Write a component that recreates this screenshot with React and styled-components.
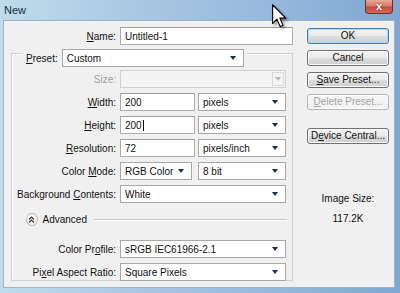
import React from 'react'
import styled, { createGlobalStyle } from 'styled-components'

const GlobalStyle = createGlobalStyle`
  html, body {
    margin: 0;
    padding: 0;
  }
  body {
    width: 400px;
    height: 293px;
    overflow: hidden;
    background: #9fc0e0;
    font-family: "Liberation Sans", Arial, sans-serif;
  }
`

const Window = styled.div`
  position: relative;
  width: 400px;
  height: 293px;
  box-sizing: border-box;
  display: flex;
  flex-direction: column;
  padding: 0 5px 5px 3px;
  background: linear-gradient(90deg, #bfdcec 0%, #a9c7e3 35%, #94b7dc 70%, #7fa7d2 100%);
`

const TitleBar = styled.div`
  height: 20px;
  display: flex;
  justify-content: space-between;
  align-items: flex-start;
  margin-left: -3px;
  margin-right: -5px;
  padding-left: 4px;
  padding-right: 7px;
`

const Title = styled.span`
  font-size: 11px;
  line-height: 20px;
  color: #1b2c40;
`

const CloseButton = styled.div`
  width: 28px;
  height: 14px;
  box-sizing: border-box;
  border: 1px solid #7a2a24;
  border-top: none;
  border-radius: 0 0 4px 4px;
  background: linear-gradient(180deg, #e9a797 0%, #d77a6a 45%, #c44b3b 55%, #d66a55 100%);
  color: #fff;
  font-size: 11px;
  font-weight: bold;
  line-height: 12px;
  text-align: center;
  text-shadow: 0 0 2px #5a1010;
`

const Body = styled.div`
  flex: 1;
  display: flex;
  box-sizing: border-box;
  border: 1px solid #9fb4c9;
  background: #f0f0f0;
  padding: 6px 0 0 7px;
  font-size: 10px;
  color: #111;
`

const LeftColumn = styled.div`
  width: 282px;
  display: flex;
  flex-direction: column;
`

const NameRow = styled.div`
  display: grid;
  grid-template-columns: 105px 173px;
  column-gap: 4px;
  align-items: center;
  height: 18px;
`

const Label = styled.span`
  text-align: right;
  white-space: nowrap;
  color: ${p => (p.$disabled ? '#a0a0a0' : '#111')};
`

const Key = styled.span`
  text-decoration: underline;
`

const TextBox = styled.div`
  height: 18px;
  box-sizing: border-box;
  border: 1px solid #abadb3;
  border-top-color: #9a9ca3;
  background: #fff;
  padding: 0 4px;
  display: flex;
  align-items: center;
  width: ${p => p.$w || 'auto'};
`

const Caret = styled.span`
  display: inline-block;
  width: 1px;
  height: 11px;
  background: #000;
  margin-left: 1px;
`

const SelectBox = styled.div`
  height: 18px;
  box-sizing: border-box;
  border: 1px solid ${p => (p.$disabled ? '#d0d0d0' : '#a8a8a8')};
  background: ${p => (p.$disabled ? '#f4f4f4' : '#fff')};
  padding: 0 0 0 4px;
  display: flex;
  align-items: center;
  justify-content: space-between;
  width: ${p => p.$w || 'auto'};
  white-space: nowrap;
`

const Arrow = styled.span`
  width: 0;
  height: 0;
  margin-right: 7px;
  border-left: 3.5px solid transparent;
  border-right: 3.5px solid transparent;
  border-top: 4px solid #1b2a5a;
`

const DisabledDrop = styled.span`
  width: 12px;
  height: 14px;
  margin-right: 1px;
  box-sizing: border-box;
  border: 1px solid #dadada;
  background: #f4f4f4;
  display: flex;
  align-items: center;
  justify-content: center;

  &::after {
    content: '';
    border-left: 3.5px solid transparent;
    border-right: 3.5px solid transparent;
    border-top: 4px solid #b8b8b8;
  }
`

const Group = styled.div`
  margin-top: 8px;
  width: 282px;
  height: 228px;
  box-sizing: border-box;
  border: 1px solid #d0d0d0;
  box-shadow: inset 1px 1px 0 #fff;
  display: flex;
  flex-direction: column;
  gap: 6px;
  padding-right: 5px;
`

const GroupHeader = styled.div`
  margin-top: -5px;
  margin-left: 11px;
  margin-bottom: -3px;
  padding: 0 3px;
  background: #f0f0f0;
  align-self: flex-start;
  display: flex;
  align-items: center;
  gap: 4px;
  height: 18px;
`

const Row = styled.div`
  display: grid;
  grid-template-columns: 104px 1fr;
  column-gap: 4px;
  align-items: center;
  height: 17px;
`

const Pair = styled.div`
  display: flex;
  gap: ${p => p.$gap || 3}px;
`

const AdvancedRow = styled.div`
  display: flex;
  align-items: center;
  height: 22px;
  padding-left: 14px;
  gap: 5px;
  margin-bottom: 5px;
  margin-top: 1px;
`

const Toggle = styled.span`
  width: 13px;
  height: 13px;
  box-sizing: border-box;
  border-radius: 50%;
  border: 1px solid #b9b9b9;
  background: radial-gradient(circle at 50% 35%, #ffffff 0%, #ececec 100%);
  display: flex;
  align-items: center;
  justify-content: center;
`

const Rule = styled.span`
  flex: 0 0 193px;
  height: 1px;
  background: #c4c4c4;
  box-shadow: 0 1px 0 #fff;
  margin-left: 2px;
`

const RightColumn = styled.div`
  margin-left: 14px;
  padding-top: 1px;
  width: 82px;
  display: flex;
  flex-direction: column;
  align-items: center;
  gap: 6px;
`

const Button = styled.div`
  width: 82px;
  height: 16px;
  box-sizing: border-box;
  border: 1px solid ${p => (p.$primary ? '#3c7fb1' : p.$disabled ? '#b5b8ba' : '#707070')};
  border-radius: 3px;
  background: ${p =>
    p.$disabled
      ? '#f4f4f4'
      : 'linear-gradient(180deg, #f2f2f2 0%, #ebebeb 50%, #dddddd 51%, #cfcfcf 100%)'};
  box-shadow: ${p => (p.$primary ? 'inset 0 0 0 1px #b0dcf3' : 'inset 0 0 0 1px #fcfcfc')};
  color: ${p => (p.$disabled ? '#a3a3a3' : '#111')};
  text-align: center;
  line-height: 14px;
  margin-top: ${p => p.$gap || 0}px;
`

const Info = styled.div`
  margin-top: 43px;
  display: flex;
  flex-direction: column;
  align-items: center;
  gap: 8px;
  line-height: 12px;
`

const Pointer = styled.svg`
  position: absolute;
  left: 272px;
  top: 4px;
  filter: drop-shadow(2px 2px 1.5px rgba(0, 0, 0, 0.35));
`

const Select = ({ children, w, disabled }) => (
  <SelectBox $w={w} $disabled={disabled}>
    <span>{children}</span>
    {disabled ? <DisabledDrop /> : <Arrow />}
  </SelectBox>
)

const App = () => (
  <Window>
    <GlobalStyle />
    <TitleBar>
      <Title>New</Title>
      <CloseButton>x</CloseButton>
    </TitleBar>
    <Body>
      <LeftColumn>
        <NameRow>
          <Label><Key>N</Key>ame:</Label>
          <TextBox>Untitled-1</TextBox>
        </NameRow>
        <Group>
          <GroupHeader>
            <Label><Key>P</Key>reset:</Label>
            <Select w="182px">Custom</Select>
          </GroupHeader>
          <Row>
            <Label $disabled>Size:</Label>
            <Select disabled w="166px" />
          </Row>
          <Row>
            <Label><Key>W</Key>idth:</Label>
            <Pair>
              <TextBox $w="75px">200</TextBox>
              <Select w="88px">pixels</Select>
            </Pair>
          </Row>
          <Row>
            <Label><Key>H</Key>eight:</Label>
            <Pair>
              <TextBox $w="75px">200<Caret /></TextBox>
              <Select w="88px">pixels</Select>
            </Pair>
          </Row>
          <Row>
            <Label><Key>R</Key>esolution:</Label>
            <Pair>
              <TextBox $w="75px">72</TextBox>
              <Select w="88px">pixels/inch</Select>
            </Pair>
          </Row>
          <Row>
            <Label>Color <Key>M</Key>ode:</Label>
            <Pair $gap={6}>
              <Select w="72px">RGB Color</Select>
              <Select w="88px">8 bit</Select>
            </Pair>
          </Row>
          <Row>
            <Label>Background <Key>C</Key>ontents:</Label>
            <Select w="166px">White</Select>
          </Row>
          <AdvancedRow>
            <Toggle>
              <svg width="7" height="7" viewBox="0 0 7 7">
                <path d="M1 3.5 L3.5 1 L6 3.5 M1 6.5 L3.5 4 L6 6.5" fill="none" stroke="#333" strokeWidth="1.1" />
              </svg>
            </Toggle>
            <span>Advanced</span>
            <Rule />
          </AdvancedRow>
          <Row>
            <Label>Color Pr<Key>o</Key>file:</Label>
            <Select w="166px">sRGB IEC61966-2.1</Select>
          </Row>
          <Row>
            <Label>Pi<Key>x</Key>el Aspect Ratio:</Label>
            <Select w="166px">Square Pixels</Select>
          </Row>
        </Group>
      </LeftColumn>
      <RightColumn>
        <Button $primary>OK</Button>
        <Button>Cancel</Button>
        <Button><Key>S</Key>ave Preset...</Button>
        <Button $disabled><Key>D</Key>elete Preset...</Button>
        <Button $gap={12}>D<Key>e</Key>vice Central...</Button>
        <Info>
          <span>Image Size:</span>
          <span>117.2K</span>
        </Info>
      </RightColumn>
    </Body>
    <Pointer width="15" height="24" viewBox="0 0 12 19">
      <path d="M0.5 0.5 L0.5 15.5 L4 12 L6.5 18 L8.8 17 L6.3 11.2 L11 11.2 Z" fill="#fff" stroke="#000" strokeWidth="0.9" strokeLinejoin="round" />
    </Pointer>
  </Window>
)

export default App
